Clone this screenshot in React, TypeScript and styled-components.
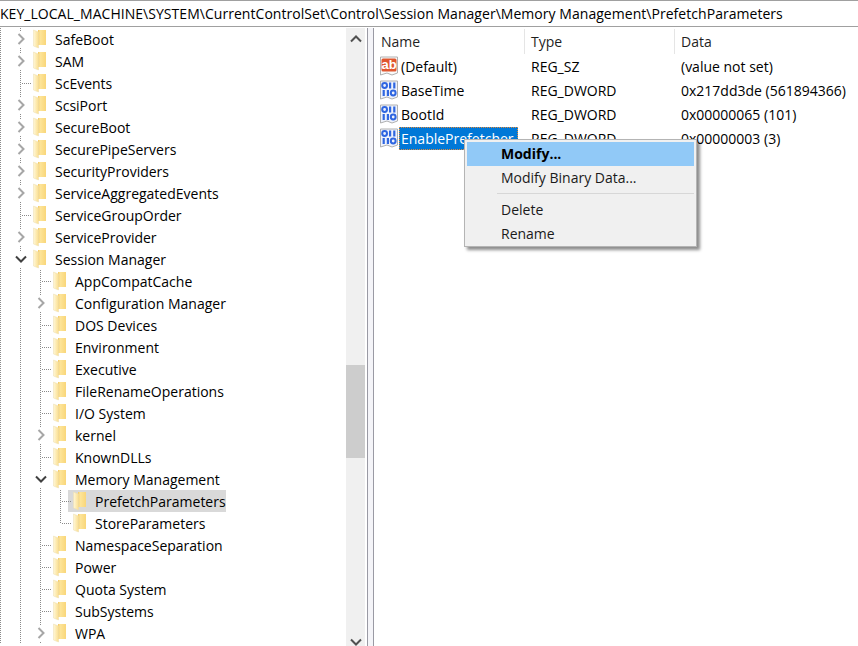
import React from 'react';
import styled, { createGlobalStyle } from 'styled-components';

type Expander = 'none' | 'right' | 'down';

interface TreeItem {
  label: string;
  level: number;
  expander: Expander;
  selected?: boolean;
  last?: boolean;
}

const treeItems: TreeItem[] = [
  { label: 'SafeBoot', level: 1, expander: 'right' },
  { label: 'SAM', level: 1, expander: 'right' },
  { label: 'ScEvents', level: 1, expander: 'none' },
  { label: 'ScsiPort', level: 1, expander: 'right' },
  { label: 'SecureBoot', level: 1, expander: 'right' },
  { label: 'SecurePipeServers', level: 1, expander: 'right' },
  { label: 'SecurityProviders', level: 1, expander: 'right' },
  { label: 'ServiceAggregatedEvents', level: 1, expander: 'right' },
  { label: 'ServiceGroupOrder', level: 1, expander: 'none' },
  { label: 'ServiceProvider', level: 1, expander: 'right' },
  { label: 'Session Manager', level: 1, expander: 'down' },
  { label: 'AppCompatCache', level: 2, expander: 'none' },
  { label: 'Configuration Manager', level: 2, expander: 'right' },
  { label: 'DOS Devices', level: 2, expander: 'none' },
  { label: 'Environment', level: 2, expander: 'none' },
  { label: 'Executive', level: 2, expander: 'none' },
  { label: 'FileRenameOperations', level: 2, expander: 'none' },
  { label: 'I/O System', level: 2, expander: 'none' },
  { label: 'kernel', level: 2, expander: 'right' },
  { label: 'KnownDLLs', level: 2, expander: 'none' },
  { label: 'Memory Management', level: 2, expander: 'down' },
  { label: 'PrefetchParameters', level: 3, expander: 'none', selected: true },
  { label: 'StoreParameters', level: 3, expander: 'none', last: true },
  { label: 'NamespaceSeparation', level: 2, expander: 'none' },
  { label: 'Power', level: 2, expander: 'none' },
  { label: 'Quota System', level: 2, expander: 'none' },
  { label: 'SubSystems', level: 2, expander: 'none' },
  { label: 'WPA', level: 2, expander: 'right' },
];

const values = [
  { name: '(Default)', type: 'REG_SZ', data: '(value not set)', kind: 'sz' },
  { name: 'BaseTime', type: 'REG_DWORD', data: '0x217dd3de (561894366)', kind: 'bin' },
  { name: 'BootId', type: 'REG_DWORD', data: '0x00000065 (101)', kind: 'bin' },
  { name: 'EnablePrefetcher', type: 'REG_DWORD', data: '0x00000003 (3)', kind: 'bin', selected: true },
];

const GlobalStyle = createGlobalStyle`
  html, body {
    margin: 0;
    padding: 0;
    background: #ffffff;
  }
  body {
    font-family: "Open Sans", "Noto Sans", "Liberation Sans", sans-serif;
    font-size: 14px;
    color: #000000;
  }
`;

const Window = styled.div`
  width: 858px;
  height: 646px;
  overflow: hidden;
  display: flex;
  flex-direction: column;
  position: relative;
  background: #ffffff;
`;

const AddressBar = styled.div`
  height: 27px;
  flex: none;
  box-sizing: border-box;
  border-top: 1px solid #a0a0a0;
  border-bottom: 1px solid #a0a0a0;
  display: flex;
  align-items: center;
  white-space: nowrap;
  overflow: hidden;
  padding-bottom: 1px;
  margin-bottom: 1px;
`;

const AddressText = styled.span`
  letter-spacing: 0.04px;
`;

const Panes = styled.div`
  flex: 1;
  min-height: 0;
  display: flex;
`;

const TreePane = styled.div`
  width: 346px;
  flex: none;
  overflow: hidden;
`;

const Row = styled.div`
  height: 22px;
  display: flex;
  align-items: center;
  white-space: nowrap;
`;

const Guide = styled.div<{ $line: boolean; $last?: boolean; $narrow?: boolean }>`
  width: ${(p) => (p.$narrow ? 13 : 20)}px;
  height: 22px;
  flex: none;
  position: relative;
  background-image: ${(p) =>
    p.$line
      ? 'repeating-linear-gradient(to bottom, #8a8a8a 0 1px, transparent 1px 2px)'
      : 'none'};
  background-size: 1px ${(p) => (p.$last ? '11px' : '22px')};
  background-repeat: no-repeat;
`;

const Elbow = styled.div`
  position: absolute;
  left: 2px;
  top: 11px;
  width: 9px;
  height: 1px;
  background-image: repeating-linear-gradient(to right, #8a8a8a 0 1px, transparent 1px 2px);
`;

const ChevronBox = styled.div`
  position: absolute;
  left: -8px;
  top: 3px;
  width: 17px;
  height: 16px;
  background: #ffffff;
  display: flex;
  align-items: center;
  justify-content: center;
`;

const TreeLabelWrap = styled.div<{ $selected?: boolean }>`
  display: flex;
  align-items: center;
  height: 22px;
  margin-left: -5px;
  padding-left: 5px;
  background: ${(p) => (p.$selected ? '#d9d9d9' : 'transparent')};
`;

const TreeLabel = styled.span`
  margin-left: 9px;
`;

const ScrollBar = styled.div`
  width: 19px;
  flex: none;
  margin-bottom: -6px;
  background: #f0f0f0;
  display: flex;
  flex-direction: column;
`;

const ScrollButton = styled.div`
  height: 21px;
  flex: none;
  display: flex;
  align-items: center;
  justify-content: center;
`;

const ScrollTrack = styled.div`
  flex: 1;
  padding-top: 316px;
`;

const ScrollThumb = styled.div`
  height: 93px;
  background: #cdcdcd;
`;

const Splitter = styled.div`
  width: 7px;
  flex: none;
  margin-left: 2px;
  box-sizing: border-box;
  background: #f4f4f8;
  border-left: 1px solid #9a9aa4;
  border-right: 1px solid #9a9aa4;
`;

const ListPane = styled.div`
  flex: 1;
  min-width: 0;
  overflow: hidden;
  padding-top: 1px;
`;

const HeaderRow = styled.div`
  height: 25px;
  display: flex;
  color: #1f1f1f;
`;

const HeaderCell = styled.div<{ $width: number; $inset: number; $divider?: boolean }>`
  width: ${(p) => p.$width}px;
  flex: none;
  box-sizing: border-box;
  padding-left: ${(p) => p.$inset}px;
  display: flex;
  align-items: center;
  border-right: ${(p) => (p.$divider ? '1px solid #e5e5e5' : 'none')};
`;

const ValueRow = styled.div`
  height: 24px;
  display: flex;
  align-items: center;
  white-space: nowrap;
  line-height: 23px;
`;

const NameCell = styled.div`
  width: 151px;
  flex: none;
  display: flex;
  align-items: center;
  padding-left: 5px;
  box-sizing: border-box;
`;

const NameText = styled.span<{ $selected?: boolean }>`
  height: 23px;
  box-sizing: border-box;
  padding: 0 ${(p) => (p.$selected ? 4 : 2)}px 0 2px;
  color: ${(p) => (p.$selected ? '#ffffff' : 'inherit')};
  background: ${(p) => (p.$selected ? '#0078d7' : 'transparent')};
  outline: ${(p) => (p.$selected ? '1px dotted #e08a3c' : 'none')};
  outline-offset: -1px;
`;

const TypeCell = styled.div`
  width: 150px;
  flex: none;
  padding-left: 6px;
  box-sizing: border-box;
`;

const DataCell = styled.div`
  padding-left: 6px;
`;

const Menu = styled.div`
  position: absolute;
  left: 464px;
  top: 139px;
  width: 233px;
  height: 108px;
  box-sizing: border-box;
  padding: 2px;
  background: #f0f0f0;
  border: 1px solid #b4b4b4;
  box-shadow: 3px 3px 3px rgba(0, 0, 0, 0.45);
`;

const MenuItem = styled.div<{ $active?: boolean }>`
  height: 24px;
  box-sizing: border-box;
  display: flex;
  align-items: center;
  padding: 0 0 2px 34px;
  font-weight: ${(p) => (p.$active ? 700 : 400)};
  background: ${(p) => (p.$active ? '#91c9f7' : 'transparent')};
  color: ${(p) => (p.$active ? '#000000' : '#1a1a1a')};
`;

const MenuDivider = styled.div`
  height: 1px;
  margin: 3px 0 4px 30px;
  background: #d7d7d7;
`;

function FolderIcon() {
  return (
    <svg width="13" height="20" viewBox="0 0 13 20" style={{ flex: 'none', display: 'block' }}>
      <defs>
        <linearGradient id="folderFace" x1="0" y1="0" x2="1" y2="0">
          <stop offset="0" stopColor="#f2c661" />
          <stop offset="0.25" stopColor="#fde59a" />
          <stop offset="1" stopColor="#f9d679" />
        </linearGradient>
        <linearGradient id="folderLeaf" x1="0" y1="0" x2="1" y2="0">
          <stop offset="0" stopColor="#fff7d8" />
          <stop offset="1" stopColor="#fbdf90" />
        </linearGradient>
      </defs>
      <path d="M5 1 L13 1 L13 16 L5 16 Z" fill="url(#folderFace)" />
      <path d="M0.5 1 L5.5 3 L5.5 19 L0.5 17 Z" fill="url(#folderLeaf)" stroke="#ecdcae" strokeWidth="0.5" />
    </svg>
  );
}

function Chevron({ dir, color }: { dir: 'up' | 'down' | 'right'; color: string }) {
  const d = {
    right: 'M3.5 1 L8.5 6 L3.5 11',
    down: 'M1 3.5 L6 8.5 L11 3.5',
    up: 'M1 8.5 L6 3.5 L11 8.5',
  }[dir];
  return (
    <svg width="12" height="12" viewBox="0 0 12 12">
      <path d={d} fill="none" stroke={color} strokeWidth="2" />
    </svg>
  );
}

function StringIcon() {
  return (
    <svg width="20" height="22" viewBox="0 0 20 22" style={{ flex: 'none', display: 'block' }}>
      <path d="M1.5 2 L18.5 2 L18.5 18 L13 20 L8 18 L1.5 20 Z" fill="#fafafa" stroke="#b0b0b0" />
      <rect x="2.5" y="3.5" width="15" height="13" rx="1.5" fill="#e0562f" />
      <text x="10" y="14" textAnchor="middle" fontFamily="Liberation Sans, sans-serif" fontWeight="700" fontSize="13" fill="#ffffff">
        ab
      </text>
    </svg>
  );
}

function BinaryIcon() {
  const blue = '#2f66e0';
  return (
    <svg width="20" height="22" viewBox="0 0 20 22" style={{ flex: 'none', display: 'block' }}>
      <path d="M1.5 2 L18.5 2 L18.5 18 L13 20 L8 18 L1.5 20 Z" fill="#eef2fc" stroke="#b0b0b0" />
      <ellipse cx="5.6" cy="6.5" rx="2.4" ry="2.4" fill="none" stroke={blue} strokeWidth="2" />
      <rect x="10" y="3.5" width="2.2" height="6" fill={blue} />
      <rect x="14.2" y="3.5" width="2.2" height="6" fill={blue} />
      <rect x="3.6" y="11" width="2.2" height="6" fill={blue} />
      <rect x="7.8" y="11" width="2.2" height="6" fill={blue} />
      <ellipse cx="14.2" cy="14" rx="2.4" ry="2.4" fill="none" stroke={blue} strokeWidth="2" />
    </svg>
  );
}

function TreeRow({ item }: { item: TreeItem }) {
  const cells = [];
  for (let i = 0; i < item.level; i++) {
    cells.push(<Guide key={i} $line />);
  }
  return (
    <Row>
      {cells}
      <Guide $line $narrow $last={item.last}>
        {item.expander === 'none' && <Elbow />}
        {item.expander !== 'none' && (
          <ChevronBox>
            <Chevron
              dir={item.expander}
              color={item.expander === 'down' ? '#404040' : '#a6a6a6'}
            />
          </ChevronBox>
        )}
      </Guide>
      <TreeLabelWrap $selected={item.selected}>
        <FolderIcon />
        <TreeLabel>{item.label}</TreeLabel>
      </TreeLabelWrap>
    </Row>
  );
}

export default function App() {
  return (
    <>
      <GlobalStyle />
      <Window>
        <AddressBar>
          <AddressText>
            KEY_LOCAL_MACHINE\SYSTEM\CurrentControlSet\Control\Session Manager\Memory Management\PrefetchParameters
          </AddressText>
        </AddressBar>
        <Panes>
          <TreePane>
            {treeItems.map((item) => (
              <TreeRow key={item.label} item={item} />
            ))}
          </TreePane>
          <ScrollBar>
            <ScrollButton>
              <Chevron dir="up" color="#505050" />
            </ScrollButton>
            <ScrollTrack>
              <ScrollThumb />
            </ScrollTrack>
            <ScrollButton>
              <Chevron dir="down" color="#505050" />
            </ScrollButton>
          </ScrollBar>
          <Splitter />
          <ListPane>
            <HeaderRow>
              <HeaderCell $width={151} $inset={7} $divider>Name</HeaderCell>
              <HeaderCell $width={150} $inset={6} $divider>Type</HeaderCell>
              <HeaderCell $width={183} $inset={6}>Data</HeaderCell>
            </HeaderRow>
            {values.map((v) => (
              <ValueRow key={v.name}>
                <NameCell>
                  {v.kind === 'sz' ? <StringIcon /> : <BinaryIcon />}
                  <NameText $selected={v.selected}>{v.name}</NameText>
                </NameCell>
                <TypeCell>{v.type}</TypeCell>
                <DataCell>{v.data}</DataCell>
              </ValueRow>
            ))}
          </ListPane>
        </Panes>
        <Menu>
          <MenuItem $active>Modify...</MenuItem>
          <MenuItem>Modify Binary Data...</MenuItem>
          <MenuDivider />
          <MenuItem>Delete</MenuItem>
          <MenuItem>Rename</MenuItem>
        </Menu>
      </Window>
    </>
  );
}
